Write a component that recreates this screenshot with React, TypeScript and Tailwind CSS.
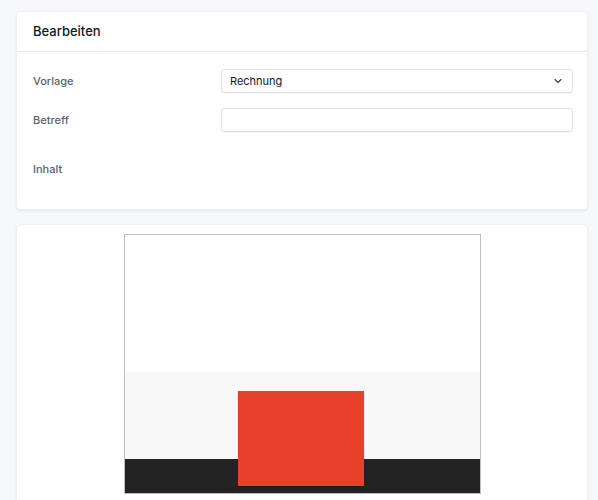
import React from "react";
import { ChevronDown } from "lucide-react";

const Field: React.FC<{ label: string; children?: React.ReactNode; className?: string }> = ({
  label,
  children,
  className = "",
}) => (
  <div className={`flex items-center ${className}`}>
    <label className="w-[188px] shrink-0 text-[11px] font-medium text-[#5b6270]">{label}</label>
    <div className="flex-1">{children}</div>
  </div>
);

const App: React.FC = () => {
  return (
    <div
      className="h-[500px] overflow-hidden bg-[#f7f8fa] pl-4 pr-[10px] pt-[11px] flex flex-col gap-[14px]"
      style={{ fontFamily: "Inter, 'Noto Sans', sans-serif" }}
    >
      <div className="shrink-0 bg-white rounded-[4px] shadow-[0_1px_2px_rgba(0,0,0,0.08)] border border-[#eef0f3]">
        <div className="h-10 flex items-center px-4 border-b border-[#e5e7eb]">
          <h2 className="text-[13px] font-medium text-[#111827]">Bearbeiten</h2>
        </div>
        <div className="pl-4 pr-[14px] pt-[17px] pb-[31px]">
          <Field label="Vorlage">
            <div className="h-6 flex items-center justify-between rounded-[3px] border border-[#dfe1e6] shadow-[0_1px_1px_rgba(0,0,0,0.04)] pl-2 pr-[8px]">
              <span className="text-[11px] text-[#111827]">Rechnung</span>
              <ChevronDown size={12} strokeWidth={2.2} className="text-[#374151]" />
            </div>
          </Field>
          <Field label="Betreff" className="mt-[15px]">
            <div className="h-6 rounded-[3px] border border-[#dfe1e6] shadow-[0_1px_1px_rgba(0,0,0,0.04)]" />
          </Field>
          <Field label="Inhalt" className="mt-[29px]" />
        </div>
      </div>

      <div className="shrink-0 h-[320px] bg-white rounded-[4px] shadow-[0_1px_2px_rgba(0,0,0,0.08)] border border-[#eef0f3] pt-[9px] flex justify-center items-start">
        <div className="w-[357px] h-[260px] border border-[#bdbdbd] flex flex-col relative">
          <div className="h-[137px] bg-white" />
          <div className="h-[87px] bg-[#f8f8f8]" />
          <div className="h-[34px] bg-[#232323]" />
          <div className="absolute left-[113px] top-[156px] w-[126px] h-[95px] bg-[#e8402a] shadow-[0_1px_1px_rgba(0,0,0,0.3)]" />
        </div>
      </div>
    </div>
  );
};

export default App;
